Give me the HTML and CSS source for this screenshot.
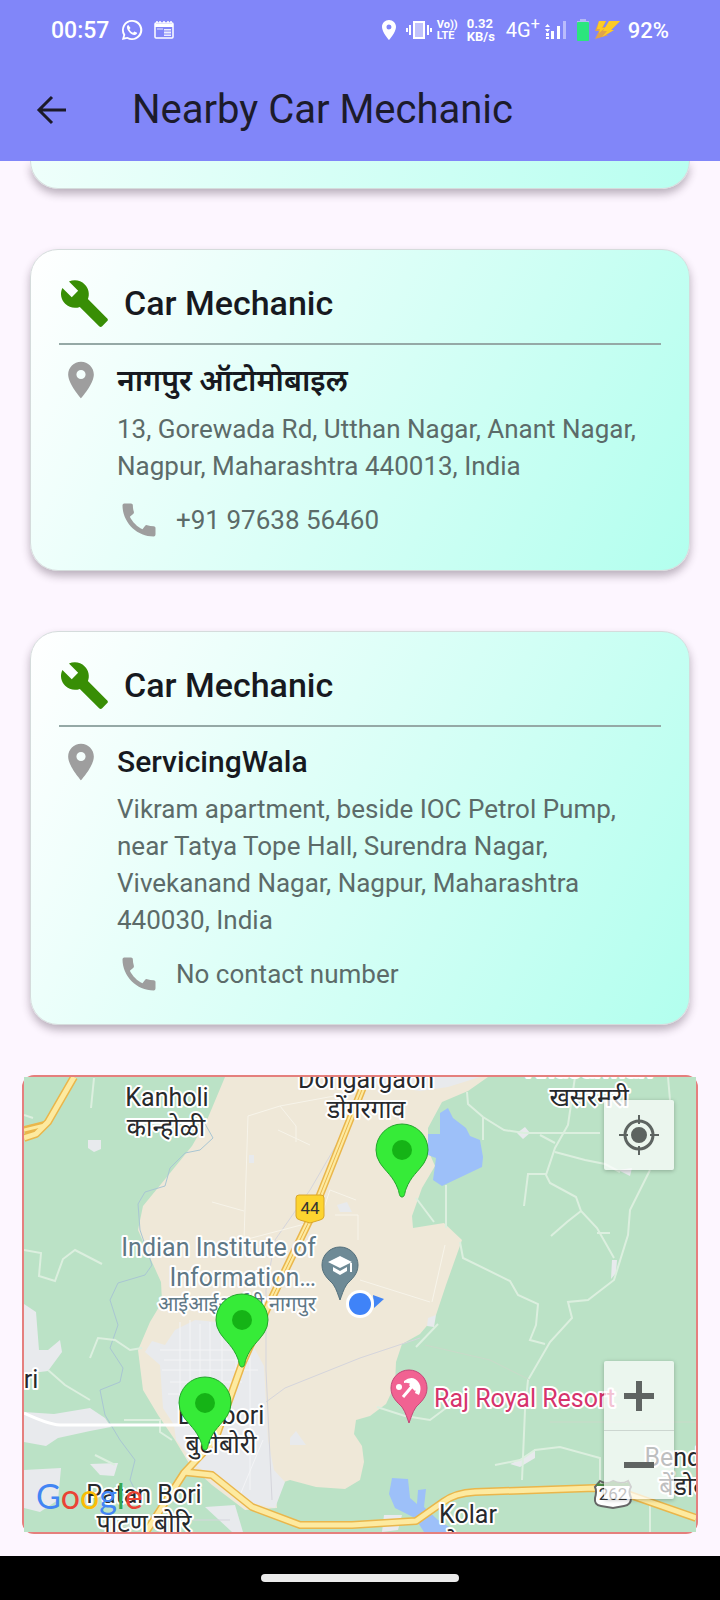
FILE: index.html
```html
<!DOCTYPE html>
<html lang="en">
<head>
<meta charset="utf-8">
<meta name="viewport" content="width=device-width, initial-scale=1">
<title>Nearby Car Mechanic</title>
<link rel="stylesheet" href="styles.css">
</head>
<body>
<svg class="sprite" aria-hidden="true">
  <symbol id="wrench" viewBox="0 0 24 24"><path d="M22.7 19l-9.1-9.1c.9-2.300.4-5-1.500-6.900-2-2-5-2.400-7.400-1.300L9 6 6 9 1.600 4.700C.4 7.100.9 10.100 2.900 12.100c1.900 1.900 4.600 2.400 6.900 1.500l9.100 9.100c.4.4 1 .4 1.400 0l2.300-2.300c.5-.4.5-1.100.1-1.400z"/></symbol>
  <symbol id="place" viewBox="0 0 24 24"><path d="M12 2C8.130 2 5 5.130 5 9c0 5.250 7 13 7 13s7-7.750 7-13c0-3.870-3.130-7-7-7zm0 9.500a2.500 2.500 0 1 1 0-5 2.500 2.500 0 0 1 0 5z"/></symbol>
  <symbol id="phone" viewBox="0 0 24 24"><path d="M20.010 15.380c-1.230 0-2.420-.2-3.530-.56a.977.977 0 0 0-1.010.240l-1.570 1.970c-2.830-1.350-5.480-3.900-6.890-6.830l1.950-1.660c.27-.28.35-.67.24-1.020-.37-1.110-.56-2.300-.56-3.530 0-.54-.45-.99-.99-.99H4.190C3.650 3 3 3.240 3 3.990 3 13.280 10.730 21 20.010 21c.71 0 .99-.63.99-1.180v-3.450c0-.54-.45-.99-.99-.99z"/></symbol>
  <symbol id="pin" viewBox="-28 -28 56 76"><path d="M0 47C-3 47-2.500 43-4 39C-9 26-16 22-22 13Q-26 7-26 0A26 26 0 0 1 26 0Q26 7 22 13C16 22 9 26 4 39C2.500 43 3 47 0 47Z" fill="#36eb38" stroke="#22a52b" stroke-width="1"/><circle r="10" fill="#15b316"/></symbol>
</svg>

<header class="top">
  <div class="status">
    <span class="clock">00:57</span>
    <svg class="whatsapp" width="22" height="22" viewBox="0 0 24 24" fill="#fff"><path d="M12 1A11 11 0 0 0 2.500 17.500L1 23l5.700-1.500A11 11 0 1 0 12 1zm0 2a9 9 0 1 1-4.900 16.600L3.800 20.300l.9-3.200A9 9 0 0 1 12 3z"/><path d="M8 6.500c-1 .3-1.700 1.500-1.500 3 .5 3.500 4.500 7.500 8 8 1.500.2 3-.8 3.100-2.400l-3-1.500-1.400 1.500c-1.700-.7-3.200-2.200-4-4l1.200-1.400z"/></svg>
    <svg class="calendar" width="20" height="20" viewBox="0 0 20 20"><path d="M2 3h16a1 1 0 0 1 1 1v13a1 1 0 0 1-1 1H2a1 1 0 0 1-1-1V4a1 1 0 0 1 1-1z" fill="none" stroke="#fff" stroke-width="1.500"/><path d="M1 4h18v3H1z" fill="#fff"/><path d="M3 1v2M6 1v2M10 1v2M14 1v2M17 1v2" stroke="#fff" stroke-width="1.500"/><path d="M3 8h6v2H3z" fill="#fff" opacity=".4"/><path d="M10 9h7v7h-7z" fill="#fff" opacity=".85"/><path d="M10 11h7M10 14h7" stroke="#8186f9"/></svg>
    <span class="spacer"></span>
    <svg class="s-pin" width="16" height="20" viewBox="5 2 14 20" fill="#fff"><use href="#place" width="24" height="24"/></svg>
    <svg class="s-vibrate" width="26" height="20" viewBox="0 0 26 20" stroke="#fff" fill="none" stroke-width="2"><rect x="8" y="2" width="10" height="16" fill="#c0c2fc"/><path d="M1 8v4M4 5v10M22 5v10M25 8v4"/></svg>
    <span class="mini volte"><span>Vo))</span><span>LTE</span></span>
    <span class="mini speed"><span>0.32</span><span>KB/s</span></span>
    <span class="net">4G<sup>+</sup></span>
    <svg class="signal" width="21" height="20" viewBox="0 0 21 20" fill="#fff"><path d="M0 7l2.500-3L5 7zM0 9h5l-2.500 3zM1 13h3v3H1zM1 17h3v2H1zM6 11h3v8H6zM12 6h3v13h-3z"/><path d="M18 1h3v18h-3z" opacity=".45"/></svg>
    <svg class="battery" width="12" height="22" viewBox="0 0 12 22"><path d="M3 0h6v2h3v3H0V2h3z" fill="#b4b8f4"/><rect y="3" width="12" height="19" rx="1" fill="#2be57d"/></svg>
    <svg class="bolt" width="26" height="20" viewBox="0 0 26 20"><path d="M5 1h7L9 7h4L26 1 17 10h3L12 15h3L1 19 5 11H1z" fill="#e0a44a"/><path d="M5 1h7L8 8h3L5 13l1-4H3zM15 1h11l-9 9h3L8 17l5-6H9z" fill="#fccb26"/></svg>
    <span class="percent">92%</span>
  </div>
  <div class="appbar">
    <button class="back" aria-label="Back"><svg width="32" height="32" viewBox="0 0 32 32" fill="none" stroke="#1c1a29" stroke-width="3"><path d="M30 16H3M16 3L3 16l13 13"/></svg></button>
    <h1>Nearby Car Mechanic</h1>
  </div>
</header>

<main>
  <div class="card card-tail"></div>

  <article class="card">
    <h2><svg class="tool"><use href="#wrench"/></svg>Car Mechanic</h2>
    <div class="details">
      <svg class="glyph"><use href="#place"/></svg>
      <div class="info">
        <h3 lang="mr">नागपुर ऑटोमोबाइल</h3>
        <p class="address">13, Gorewada Rd, Utthan Nagar, Anant Nagar, Nagpur, Maharashtra 440013, India</p>
        <p class="contact"><svg class="glyph"><use href="#phone"/></svg>+91 97638 56460</p>
      </div>
    </div>
  </article>

  <article class="card">
    <h2><svg class="tool"><use href="#wrench"/></svg>Car Mechanic</h2>
    <div class="details">
      <svg class="glyph"><use href="#place"/></svg>
      <div class="info">
        <h3>ServicingWala</h3>
        <p class="address">Vikram apartment, beside IOC Petrol Pump, near Tatya Tope Hall, Surendra Nagar, Vivekanand Nagar, Nagpur, Maharashtra 440030, India</p>
        <p class="contact"><svg class="glyph"><use href="#phone"/></svg>No contact number</p>
      </div>
    </div>
  </article>

  <section class="map" aria-label="Map">
    <svg class="canvas" viewBox="24 1077 672 455">
      <rect x="24" y="1077" width="672" height="455" fill="#bbe2c6"/>
      <!-- open land -->
      <path fill="#efe8d8" d="M225 1077L207 1120L192 1146L166 1178L143 1206L138 1230L152 1262L161 1282L162 1302L150 1322L138 1350L143 1390L158 1415L175 1440L190 1465L212 1485L245 1510L277 1508L275 1485L290 1480L316 1487L345 1489L360 1480L364 1462L362 1446L354 1434L356 1420L370 1416L386 1404L395 1385L396 1362L402 1344L420 1334L436 1315L446 1285L462 1240L444 1223L413 1228L412 1216L422 1188L435 1166L428 1150V1128L442 1102L468 1091L488 1077Z"/>
      <path fill="#e8eaed" d="M330 1077H480L448 1087L420 1091L385 1086Z"/>
      <!-- built-up areas -->
      <g fill="#e8eaed">
        <path d="M175 1330L195 1320L218 1322L250 1340L264 1366L268 1440L274 1470L285 1482L275 1508L246 1502L215 1480L196 1465L176 1440L174 1425L163 1408L160 1365L145 1352L152 1341L165 1345Z"/>
        <path d="M24 1304L36 1312L39 1350L48 1350L60 1340L62 1352L48 1371L24 1374Z"/>
        <path d="M24 1412L54 1414L90 1408L105 1418L111 1427L90 1431L58 1438L46 1446L24 1442Z"/>
        <path d="M24 1470L61 1468L58 1500L40 1512L24 1508Z"/>
        <path d="M90 1464L118 1463L114 1476L100 1475Z"/>
        <path d="M205 1507L235 1505L243 1532H232Z"/>
        <path d="M88 1140L101 1140V1149L94 1152L88 1148ZM517 1133L525 1127L530 1133L523 1139ZM612 1260H617L616 1273L611 1279ZM510 1464L527 1456L535 1449V1458L520 1467ZM384 1515H402L398 1530L382 1532ZM290 1438L296 1431L306 1445H290ZM249 1155h5v8h-5zM337 1205L347 1202L352 1212L340 1212ZM428 1318L436 1315L434 1327L427 1326ZM618 1170L632 1168L630 1176Z"/>
      </g>
      <!-- street grid -->
      <g fill="none" stroke="#f3f4f6" stroke-width="1">
        <path d="M160 1350H245M164 1360H250M162 1370H258M170 1382H242M168 1394H220M180 1322V1410M190 1320V1400M200 1324V1395M210 1322V1392M222 1330V1400M236 1345V1375M250 1350V1490M263 1440L240 1495"/>
      </g>
      <!-- rivers and rail -->
      <g fill="none" stroke="#a9c6d3" stroke-width="1">
        <path d="M204 1122L213 1138L200 1150L185 1153L170 1168L165 1186L145 1192L138 1204L140 1230L152 1265L145 1275L118 1283L110 1300L118 1325L110 1348L123 1368L120 1382L100 1390L105 1415L120 1440L135 1460L130 1480L140 1500"/>
      </g>
      <g fill="none" stroke="#d5d5dc" stroke-width="1"><path d="M345 1130L310 1190L275 1240L266 1290V1370L272 1500M266 1402L285 1388L360 1358L420 1338M105 1530L160 1520H230"/></g>
      <!-- minor roads -->
      <g fill="none" stroke="#f7f4ea" stroke-width="1">
        <path d="M248 1116L280 1106L345 1094M248 1116L244 1240L320 1220L330 1190L356 1200M212 1202L244 1211M280 1106L296 1126V1142M278 1130L310 1145M335 1215H358V1240M360 1280L430 1302M445 1245L432 1302"/>
      </g>
      <g fill="none" stroke="#dcefdf" stroke-width="2">
        <path d="M94 1078L91 1108M24 1250L41 1253L39 1276L55 1281L63 1259L75 1250L102 1264M24 1115L33 1118M467 1092L468 1104L483 1117L504 1130L524 1133H600M483 1117V1140M575 1077L568 1125L555 1148L546 1175L550 1183L576 1197L581 1211L597 1228L614 1258M540 1135L555 1143M555 1152L585 1160L605 1164L620 1172M546 1174H528L524 1206M581 1211L567 1222L551 1236M668 1077L670 1100M650 1170L630 1210L628 1235L614 1280L588 1300L568 1302L572 1318L550 1342L528 1380L525 1410L522 1480M597 1233H610M460 1242L463 1258L510 1281L518 1295L538 1304L536 1325L530 1340L545 1344M446 1185V1228M416 1198L434 1222M416 1347L438 1324M377 1407L405 1416L430 1420L450 1405M495 1465L520 1460L535 1450L560 1447L600 1458V1488M650 1505V1532M48 1370L65 1385L90 1400M90 1358L98 1338L115 1340L130 1350L142 1348M124 1420H160V1432L172 1440M95 1455L115 1465"/>
      </g>
      <g stroke="#c9dac9" fill="none"><path d="M425 1345L490 1360L530 1380M550 1422H696"/></g>
      <path d="M24 1413Q48 1424 60 1425H185" fill="none" stroke="#fff" stroke-width="3"/>
      <!-- water -->
      <path fill="#9dc0f9" d="M440 1113L448 1108L453 1118L466 1128L470 1136L480 1140L483 1157L482 1167L442 1186L433 1180L436 1158L428 1155V1134H440ZM392 1478L408 1479L410 1498L417 1504L418 1490L426 1489L424 1507L438 1520L451 1528L450 1532H424L415 1518L395 1508L389 1494Z"/>
      <!-- highways -->
      <g fill="none" stroke-linejoin="round">
        <g stroke="#eab64b" stroke-width="8">
          <path d="M367 1077L312 1215L270 1302L242 1364L215 1440L184 1473L146 1532"/>
          <path d="M184 1472L212 1475L252 1507L300 1525H352L416 1521L443 1502Q455 1493 475 1492L595 1488L630 1495L696 1518"/>
          <path d="M74 1077L48 1122L36 1134L24 1138"/><path d="M45 1125L24 1130"/>
        </g>
        <g stroke="#fdeaa0" stroke-width="5">
          <path d="M367 1077L312 1215L270 1302L242 1364L215 1440L184 1473L146 1532"/>
          <path d="M184 1472L212 1475L252 1507L300 1525H352L416 1521L443 1502Q455 1493 475 1492L595 1488L630 1495L696 1518"/>
          <path d="M74 1077L48 1122L36 1134L24 1138"/><path d="M45 1125L24 1130" stroke-width="3"/>
        </g>
        <path d="M367 1077L312 1215L270 1302" stroke="#eab64b" stroke-width="1"/>
      </g>
      <!-- route shields -->
      <path d="M299 1195H321Q324 1195 324 1198V1216Q324 1219 320 1220L310 1223L300 1220Q296 1219 296 1216V1198Q296 1195 299 1195Z" fill="#fdd42f" stroke="#d9a62a"/>
      <text class="route" x="310" y="1214">44</text>
      <path d="M600 1481Q606 1485 613 1481Q621 1485 628 1481L631 1487Q628 1491 631 1498Q631 1505 624 1506L613 1508L601 1506Q594 1505 595 1498Q597 1491 595 1487Z" fill="#fff" stroke="#666" stroke-width="2"/>
      <path d="M598 1483Q606 1485 613 1481Q621 1485 628 1482L630 1486H596Z" fill="#4d8d47"/>
      <text class="route" x="613" y="1500">262</text>
      <!-- place names -->
      <g class="place-name">
        <text x="167" y="1106">Kanholi</text><text x="166" y="1136">कान्होळी</text>
        <text x="366" y="1088">Dongargaon</text><text x="366" y="1118">डोंगरगाव</text>
        <text x="589" y="1077">Khasarmari</text><text x="589" y="1106">खसरमरी</text>
        <text x="31" y="1388">ri</text>
        <text x="221" y="1424">Butibori</text><text x="221" y="1453">बुटीबोरी</text>
        <text x="144" y="1503">Patan Bori</text><text x="144" y="1532">पाटण बोरि</text>
        <text x="468" y="1523">Kolar</text><text x="462" y="1552">कोलार</text>
        <text x="686" y="1466">Bendoli</text><text x="688" y="1495">बेंडोली</text>
      </g>
      <g class="place-name campus">
        <text x="316" y="1256">Indian Institute of</text><text x="316" y="1286">Information…</text>
        <text class="small" x="316" y="1311">आईआईआईटी नागपुर</text>
      </g>
      <text class="place-name resort" x="434" y="1407">Raj Royal Resort</text>
      <!-- points of interest -->
      <g transform="translate(340 1265)"><path d="M0 35C-2 30-3 25-7 19C-12 14-18 9-18 0A18 18 0 0 1 18 0C18 9 12 14 7 19C3 25 2 30 0 35Z" fill="#6e8a96" stroke="#54707c"/><path fill="#fff" d="M-12 -3L0 -9L12 -3L0 3ZM-7 2L0 6L7 2V6L0 10L-7 6ZM10 -2h2v9h-2z"/></g>
      <g transform="translate(409 1388)"><path d="M0 35C-2 30-3 25-7 19C-12 14-18 9-18 0A18 18 0 0 1 18 0C18 9 12 14 7 19C3 25 2 30 0 35Z" fill="#f16292" stroke="#c24878"/><circle cx="-10" cy="-1" r="3" fill="#fff"/><path d="M-5 -7Q4 -14 10 -5Q13 0 10 7L6 5Q8 0 3 -3Q-1 -6 -5 -5Z" fill="#fff"/><path d="M-6 9L5 -4M1 -4L7 2" stroke="#fff" stroke-width="3"/></g>
      <path d="M373 1295L384 1299L374 1308Z" fill="#4285f4"/>
      <circle cx="360" cy="1304" r="14" fill="#fff"/><circle cx="360" cy="1304" r="11" fill="#3f83f8"/>
      <use href="#pin" x="374" y="1122" width="56" height="76"/>
      <use href="#pin" x="214" y="1292" width="56" height="76"/>
      <use href="#pin" x="177" y="1375" width="56" height="76"/>
      <text class="google" x="36" y="1509"><tspan fill="#4285f4">G</tspan><tspan fill="#ea4335">o</tspan><tspan fill="#fbbc05">o</tspan><tspan fill="#4285f4">g</tspan><tspan fill="#34a853">l</tspan><tspan fill="#ea4335">e</tspan></text>
    </svg>
    <button class="control locate" aria-label="My location"><svg width="40" height="40" viewBox="0 0 40 40" fill="none" stroke="#5d6461" stroke-width="2"><circle cx="20" cy="20" r="14" stroke-width="3"/><circle cx="20" cy="20" r="7" fill="#5d6461"/><path d="M20 0v9M20 31v9M0 20h9M31 20h9"/></svg></button>
    <div class="control zoom">
      <button aria-label="Zoom in"><svg width="32" height="32" viewBox="0 0 32 32" stroke="#5f6462" stroke-width="6"><path d="M1 16h30M16 1v30"/></svg></button>
      <button aria-label="Zoom out"><svg width="32" height="32" viewBox="0 0 32 32" stroke="#5f6462" stroke-width="6"><path d="M1 16h30"/></svg></button>
    </div>
  </section>
</main>
<footer class="nav"><span class="handle"></span></footer>
</body>
</html>
```

FILE: styles.css
```css
* { box-sizing: border-box; }

body {
  margin: 0;
  min-height: 100vh;
  display: flex;
  flex-direction: column;
  background: #fdf6ff;
  color: #17191f;
  font-family: Roboto, "Noto Sans", "Noto Sans Devanagari", sans-serif;
}

h1, h2, h3, p { margin: 0; }
button { padding: 0; border: 0; background: none; display: grid; place-items: center; }
svg { display: block; flex: none; }
.sprite { position: absolute; width: 0; height: 0; }

.top { background: #8186f9; }

.status {
  display: flex;
  align-items: center;
  height: 60px;
  padding: 0 51px;
  color: #fff;
  font-size: 23px;
  font-weight: 500;
}
.clock { margin-right: 12px; }
.whatsapp { margin-right: 11px; }
.spacer { flex: 1; }
.s-pin { margin-right: 9px; }
.s-vibrate { margin-right: 5px; }
.mini {
  display: flex;
  flex-direction: column;
  font-size: 13px;
  line-height: 13px;
  font-weight: 700;
}
.volte { width: 20px; margin-right: 10px; font-size: 11px; line-height: 11px; }
.speed { margin-right: 11px; }
.net { font-size: 20px; line-height: 24px; margin-right: 5px; font-weight: 400; }
.net sup { font-size: 16px; line-height: 8px; }
.signal { margin-right: 11px; }
.battery { margin-right: 5px; }
.bolt { margin-right: 8px; }
.percent { font-size: 22px; }

.appbar {
  display: flex;
  align-items: center;
  gap: 64px;
  height: 101px;
  padding: 0 36px 2px;
}
.appbar h1 { font-size: 40px; line-height: 48px; font-weight: 400; color: #1c1b2b; }

main {
  flex: 1;
  display: flex;
  flex-direction: column;
  gap: 60px;
  overflow: hidden;
}

.card {
  margin: 0 30px;
  padding: 28px;
  border: 1px solid #d5dcdc;
  border-radius: 28px;
  background: linear-gradient(118deg, #fff, #b2ffee);
  box-shadow: 0 5px 8px rgba(50, 30, 50, .32);
}
.card-tail {
  padding: 14px 0 13px;
  border-top: 0;
  border-radius: 0 0 28px 28px;
  background: linear-gradient(100deg, #effffb, #b8fff0);
}

.card h2 {
  display: flex;
  align-items: center;
  gap: 14px;
  padding-bottom: 14px;
  border-bottom: 2px solid #95a9a6;
  font-size: 34px;
  line-height: 51px;
  font-weight: 500;
}
.tool { width: 51px; height: 51px; fill: #388e05; }
.details { display: flex; gap: 14px; padding-top: 13px; }
.glyph { width: 44px; height: 44px; fill: #9e9e9e; }
.info { flex: 1; min-width: 0; }
.info h3 { font-size: 30px; line-height: 44px; font-weight: 500; margin-bottom: 7px; }
.info h3:lang(mr) { line-height: 46px; font-weight: 600; }
.address, .contact { color: #5c6b69; font-size: 26px; line-height: 37px; }
.contact { display: flex; align-items: center; gap: 15px; margin-top: 13px; }

.map {
  position: relative;
  margin: -10px 22px 22px;
  border: 2px solid #e57f7d;
  border-radius: 12px;
}
.canvas { width: 100%; height: auto; }
.place-name {
  font-size: 25px;
  fill: #27292c;
  stroke: #fff;
  stroke-width: 4px;
  stroke-linejoin: round;
  paint-order: stroke;
  text-anchor: middle;
}
.campus { fill: #5f7886; text-anchor: end; }
.small { font-size: 20px; }
.resort { fill: #d6336c; text-anchor: start; }
.route { font-size: 17px; fill: #333; text-anchor: middle; }
.google { font-family: Lato, sans-serif; font-size: 34px; font-weight: 400; stroke-width: 1px; }
.google tspan:nth-child(odd) { stroke: none; }

.control {
  position: absolute;
  right: 22px;
  width: 70px;
  background: rgba(255, 255, 255, .7);
  border-radius: 2px;
  box-shadow: 0 1px 4px rgba(0, 0, 0, .25);
}
.locate { top: 23px; height: 70px; }
.zoom { bottom: 33px; }
.zoom button { width: 100%; height: 69px; }
.zoom button + button { border-top: 1px solid #ccd6d0; }

.nav {
  display: grid;
  place-items: center;
  height: 44px;
  background: #000;
}
.handle { width: 198px; height: 8px; border-radius: 4px; background: #ebebeb; }
```
